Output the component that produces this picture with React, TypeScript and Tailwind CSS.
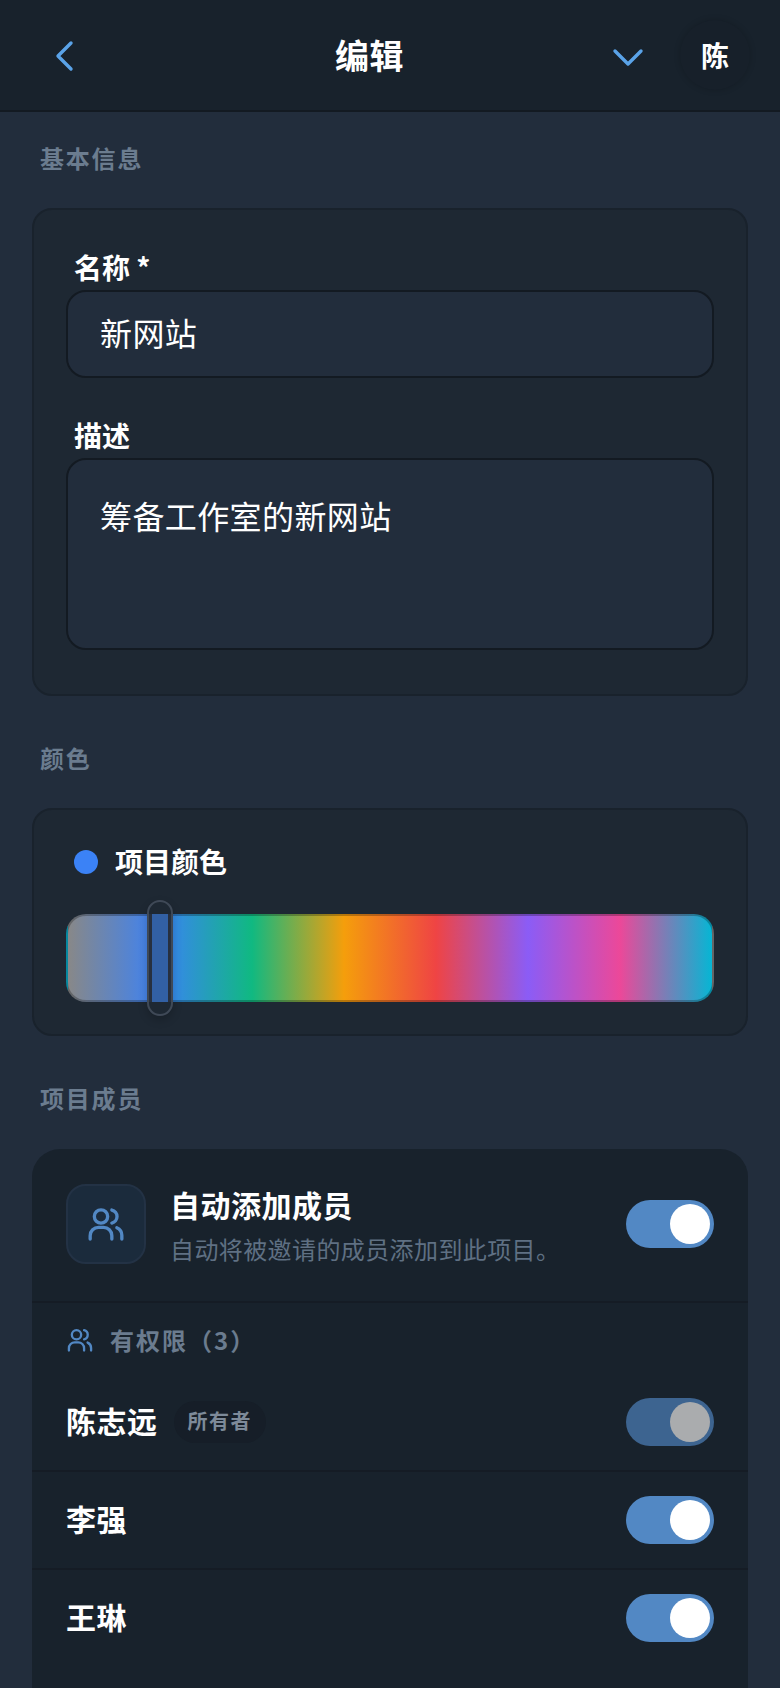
import React from "react";

function UsersIcon({ size, width = 2 }: { size: number; width?: number }) {
  return (
    <svg width={size} height={size} viewBox="0 0 24 24" fill="none" stroke="#5288c4" strokeWidth={width} strokeLinecap="round" strokeLinejoin="round">
      <circle cx="9" cy="7.5" r="4" />
      <path d="M2.5 21v-2a5 5 0 0 1 5-5h3a5 5 0 0 1 5 5v2" />
      <path d="M15.5 3.6a4 4 0 0 1 0 7.8" />
      <path d="M18.5 14.2a5 5 0 0 1 3 4.6V21" />
    </svg>
  );
}

function Toggle({ muted = false }: { muted?: boolean }) {
  return (
    <div className={`flex h-12 w-[88px] shrink-0 items-center justify-end rounded-full pr-1 ${muted ? "bg-[#3d6490]" : "bg-[#5288c4]"}`}>
      <div className={`h-10 w-10 rounded-full ${muted ? "bg-[#aaacae]" : "bg-white"}`} />
    </div>
  );
}

function SectionTitle({ children, className = "" }: { children: React.ReactNode; className?: string }) {
  return (
    <div className={`pl-2 text-[24px] leading-8 font-bold tracking-[1.8px] text-[#6b7c8f] ${className}`}>{children}</div>
  );
}

function MemberRow({ name, badge, muted, divider = true }: { name: string; badge?: string; muted?: boolean; divider?: boolean }) {
  return (
    <div className={`flex items-center justify-between px-[34px] ${divider ? "h-[98px] border-t-2 border-[#151c25]" : "h-[96px]"}`}>
      <div className="flex items-center gap-4">
        <span className="pb-1 text-[30px] leading-10 font-semibold tracking-[0.5px] text-white">{name}</span>
        {badge && (
          <span className="flex h-[42px] items-center rounded-full bg-[#161e28] px-[14px] pb-[2px] text-[20px] font-semibold tracking-[1.5px] text-[#7d8a99]">
            {badge}
          </span>
        )}
      </div>
      <Toggle muted={muted} />
    </div>
  );
}

export default function App() {
  return (
    <div
      className="flex h-[1688px] w-[780px] flex-col overflow-hidden bg-[#222d3c]"
      style={{ fontFamily: '"Noto Sans CJK SC", "Noto Sans", sans-serif' }}
    >
      <header className="relative flex h-[112px] shrink-0 items-center justify-between border-b-2 border-[#131a22] bg-[#18222c] pr-[30px] pl-[50px]">
        <svg width="28" height="32" viewBox="0 0 28 32" fill="none" stroke="#5aa3e8" strokeWidth="3.4" strokeLinecap="round" strokeLinejoin="round" className="mt-[1px]">
          <path d="M21 3 L8 16 L21 29" />
        </svg>
        <div className="absolute top-[31px] left-[335px] text-[34px] leading-[48px] font-bold tracking-[0.5px] text-white">编辑</div>
        <div className="flex items-center gap-[36px]">
          <svg width="32" height="20" viewBox="0 0 32 20" fill="none" stroke="#5aa3e8" strokeWidth="3.4" strokeLinecap="round" strokeLinejoin="round" className="mt-[6px]">
            <path d="M3 3 L16 16 L29 3" />
          </svg>
          <div className="flex h-[70px] w-[70px] items-center justify-center rounded-full bg-[#17202a] text-[28px] font-bold text-white shadow-[0_0_6px_rgba(0,0,0,0.18)]">
            陈
          </div>
        </div>
      </header>

      <main className="flex flex-col px-8">
        <SectionTitle className="mt-[30px] mb-[34px]">基本信息</SectionTitle>
        <section className="rounded-[20px] border-2 border-[#19222c] bg-[#1e2833] px-8 pt-[39px] pb-[44px]">
          <div className="mb-[5px] pl-2 text-[28px] leading-9 font-semibold text-white">名称 *</div>
          <div className="flex h-[88px] items-center rounded-[20px] border-2 border-[#131a22] bg-[#222d3c] px-8 pb-1 text-[32px] tracking-[0.4px] text-white">
            新网站
          </div>
          <div className="mt-[39px] mb-[5px] pl-2 text-[28px] leading-9 font-semibold text-white">描述</div>
          <div className="h-[192px] rounded-[20px] border-2 border-[#131a22] bg-[#222d3c] px-8 pt-[32px] text-[32px] leading-[46px] tracking-[0.4px] text-white">
            筹备工作室的新网站
          </div>
        </section>

        <SectionTitle className="mt-[46px] mb-[34px]">颜色</SectionTitle>
        <section className="rounded-[20px] border-2 border-[#19222c] bg-[#1e2833] px-8 pt-[31px] pb-[32px]">
          <div className="flex h-10 items-center gap-[17px] pl-2">
            <div className="mt-[2px] h-6 w-6 rounded-full bg-[#3b82f6]" />
            <span className="text-[28px] leading-10 font-bold text-white">项目颜色</span>
          </div>
          <div className="relative mt-[33px] h-[88px] rounded-[20px] border-2 border-black/25 bg-[linear-gradient(to_right,#888888_0%,#3b82f6_14.28%,#10b981_28.57%,#f59e0b_42.85%,#ef4444_57.14%,#8b5cf6_71.42%,#ec4899_85.71%,#06b6d4_100%)]">
            <div className="absolute top-[-16px] left-[79px] flex h-[116px] w-[26px] items-stretch justify-center rounded-full border-2 border-[#3f4957] py-[12px] shadow-[0_4px_10px_rgba(0,0,0,0.2)]">
              <div className="flex w-full items-stretch justify-center bg-[#27303f] px-[3px]">
                <div className="w-full bg-[#3260a4]" />
              </div>
            </div>
          </div>
        </section>

        <SectionTitle className="mt-[46px] mb-[35px]">项目成员</SectionTitle>
        <section className="flex-1 rounded-t-[28px] bg-[#18222c] pb-40">
          <div className="flex h-[152px] items-center justify-between px-[34px] pb-[2px]">
            <div className="flex items-center gap-6">
              <div className="flex h-20 w-20 items-center justify-center rounded-[20px] border-2 border-[#233245] bg-[#1b2b3c]">
                <UsersIcon size={40} />
              </div>
              <div className="flex flex-col">
                <span className="text-[30px] leading-10 font-semibold tracking-[0.5px] text-white">自动添加成员</span>
                <span className="mt-[9px] text-[24px] leading-8 tracking-[0.4px] text-[#5f7083]">自动将被邀请的成员添加到此项目。</span>
              </div>
            </div>
            <Toggle />
          </div>
          <div className="flex h-[73px] items-center gap-[16px] border-t-2 border-[#151c25] pt-[2px] pl-[34px]">
            <UsersIcon size={28} />
            <span className="text-[24px] leading-8 font-bold tracking-[2px] text-[#6b7c8f]">有权限（3）</span>
          </div>
          <MemberRow name="陈志远" badge="所有者" muted divider={false} />
          <MemberRow name="李强" />
          <MemberRow name="王琳" />
        </section>
      </main>
    </div>
  );
}
